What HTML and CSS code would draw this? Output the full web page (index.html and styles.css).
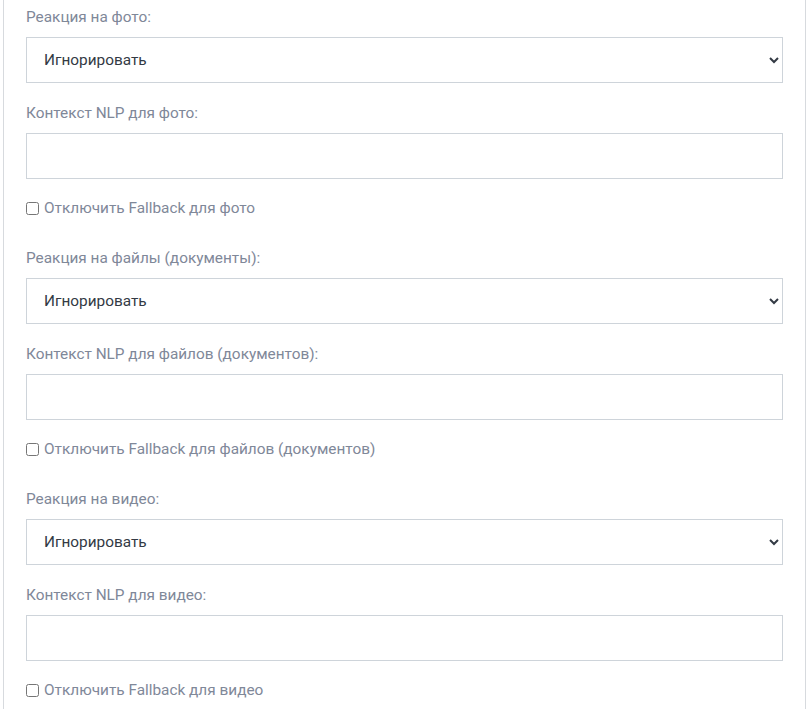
FILE: index.html
```html
<!DOCTYPE html>
<html lang="ru">
<head>
<meta charset="utf-8">
<title>Настройки</title>
<link rel="stylesheet" href="styles.css">
</head>
<body>
<div class="panel">
  <div class="field">
    <label class="field-label">Реакция на фото:</label>
    <select class="control"><option>Игнорировать</option></select>
  </div>
  <div class="field">
    <label class="field-label">Контекст NLP для фото:</label>
    <input class="control" type="text">
  </div>
  <label class="check"><input type="checkbox">Отключить Fallback для фото</label>

  <div class="field">
    <label class="field-label">Реакция на файлы (документы):</label>
    <select class="control"><option>Игнорировать</option></select>
  </div>
  <div class="field">
    <label class="field-label">Контекст NLP для файлов (документов):</label>
    <input class="control" type="text">
  </div>
  <label class="check"><input type="checkbox">Отключить Fallback для файлов (документов)</label>

  <div class="field">
    <label class="field-label">Реакция на видео:</label>
    <select class="control"><option>Игнорировать</option></select>
  </div>
  <div class="field">
    <label class="field-label">Контекст NLP для видео:</label>
    <input class="control" type="text">
  </div>
  <label class="check"><input type="checkbox">Отключить Fallback для видео</label>
</div>
</body>
</html>
```

FILE: styles.css
```css
html, body {
  margin: 0;
  padding: 0;
  background: #ffffff;
  overflow: hidden;
}
body {
  font-family: Roboto, "Liberation Sans", sans-serif;
  font-size: 15.36px;
  line-height: 22px;
}
.panel {
  margin: 0 4px 0 3px;
  border-left: 1px solid #d7dade;
  border-right: 1px solid #d7dade;
  padding: 6px 22px 0 22px;
  height: 800px;
}
.field {
  margin-bottom: 19px;
}
.field-label {
  display: block;
  color: #7f8899;
  margin-bottom: 9px;
}
.control {
  display: block;
  box-sizing: border-box;
  width: 100%;
  height: 46px;
  border: 1px solid #ced4da;
  border-radius: 0;
  background: #ffffff;
  font-family: Roboto, "Liberation Sans", sans-serif;
  font-size: 15.36px;
  color: #333a44;
  padding: 0 14px 0 13px;
  margin: 0;
  outline: none;
}
.check {
  display: flex;
  align-items: center;
  color: #7f8899;
  margin-top: -1px;
  margin-bottom: 28px;
}
.check input {
  margin: 0 5px 0 0;
  width: 13px;
  height: 13px;
}
```
